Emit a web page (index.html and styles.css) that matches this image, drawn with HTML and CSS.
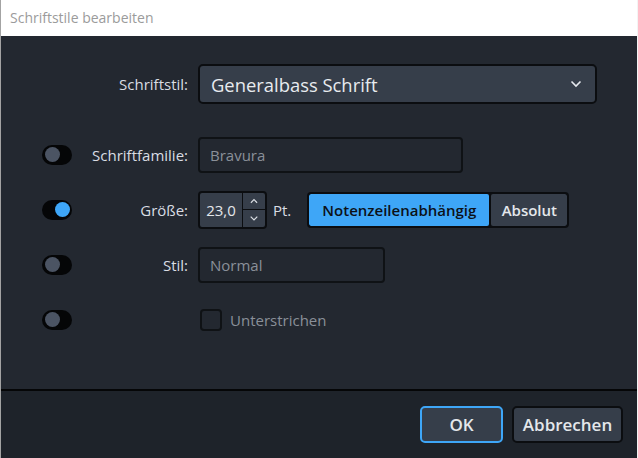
FILE: index.html
```html
<!DOCTYPE html>
<html lang="de">
<head>
<meta charset="utf-8">
<link rel="stylesheet" href="styles.css">
</head>
<body>
<div class="window">
  <div class="titlebar">Schriftstile bearbeiten</div>
  <div class="content">
    <div class="row main-row">
      <div class="cell"></div>
      <label class="label">Schriftstil:</label>
      <div class="select">
        <span class="select-text">Generalbass Schrift</span>
        <svg class="chev" width="12" height="8" viewBox="0 0 12 8"><path d="M1.5 1.5 L6 6 L10.5 1.5" fill="none" stroke="#e6e9ee" stroke-width="1.6"/></svg>
      </div>
    </div>
    <div class="row">
      <div class="toggle"><span class="knob"></span></div>
      <label class="label">Schriftfamilie:</label>
      <div class="input w-family">Bravura</div>
    </div>
    <div class="row">
      <div class="toggle on"><span class="knob"></span></div>
      <label class="label">Größe:</label>
      <div class="controls">
        <div class="spin">
          <span class="spin-val">23,0</span>
          <div class="spin-btns">
            <svg width="22" height="18" viewBox="0 0 22 18"><path d="M7.5 11 L11 7.5 L14.5 11" fill="none" stroke="#d8dce2" stroke-width="1.3"/></svg>
            <svg width="22" height="18" viewBox="0 0 22 18"><path d="M7.5 7 L11 10.5 L14.5 7" fill="none" stroke="#d8dce2" stroke-width="1.3"/></svg>
          </div>
        </div>
        <span class="unit">Pt.</span>
        <div class="segmented">
          <span class="seg active">Notenzeilenabhängig</span>
          <span class="seg plain">Absolut</span>
        </div>
      </div>
    </div>
    <div class="row">
      <div class="toggle"><span class="knob"></span></div>
      <label class="label">Stil:</label>
      <div class="input w-style">Normal</div>
    </div>
    <div class="row">
      <div class="toggle"><span class="knob"></span></div>
      <span class="label"></span>
      <div class="check-wrap">
        <span class="checkbox"></span>
        <span class="check-text">Unterstrichen</span>
      </div>
    </div>
  </div>
  <div class="footer">
    <button class="btn ok">OK</button>
    <button class="btn cancel">Abbrechen</button>
  </div>
</div>
</body>
</html>
```

FILE: styles.css
```css
* { box-sizing: border-box; }
html, body { margin: 0; padding: 0; background: #ffffff; }
body { font-family: "Open Sans", "Noto Sans", sans-serif; }

.window {
  width: 638px;
  height: 458px;
  display: flex;
  flex-direction: column;
  border-left: 1px solid #a3a3a3;
  border-right: 1px solid #f4f4f4;
}

.titlebar {
  height: 36px;
  background: #ffffff;
  color: #9b9b9b;
  font-size: 14px;
  padding-left: 9px;
  line-height: 36px;
}

.content {
  flex: 1;
  background: #232830;
  padding-top: 28px;
  padding-left: 41px;
  border-bottom: 2px solid #050607;
}

.row {
  display: grid;
  grid-template-columns: 30px 126px auto;
  align-items: center;
  height: 55px;
  color: #d9dde3;
  font-size: 15px;
}
.main-row { height: 40px; margin-bottom: 23px; }

.label { text-align: right; padding-right: 10px; }

.select {
  width: 399px;
  height: 40px;
  background: #363e4a;
  border: 2px solid #0b0d10;
  border-radius: 5px;
  display: flex;
  align-items: center;
  justify-content: space-between;
  padding: 0 13px 0 11px;
}
.select-text { font-size: 18.4px; color: #e8ebef; }

.toggle {
  width: 30px;
  height: 20px;
  border-radius: 10px;
  background: #050607;
  display: flex;
  align-items: center;
  padding: 0 3px;
}
.knob {
  width: 15px;
  height: 15px;
  border-radius: 50%;
  background: #4b5463;
}
.toggle.on { justify-content: flex-end; padding: 0 2px; }
.toggle.on .knob { background: #3ea6f7; }

.input {
  height: 36px;
  border: 2px solid #0f1215;
  border-radius: 4px;
  background: #232830;
  color: #8a9099;
  display: flex;
  align-items: center;
  padding-left: 10px;
}
.w-family { width: 265px; }
.w-style { width: 187px; }

.controls { display: flex; align-items: center; }
.spin {
  display: flex;
  height: 38px;
  width: 69px;
  border: 2px solid #0b0d10;
  border-radius: 4px;
  background: #363e4a;
  overflow: hidden;
}
.spin-val { width: 44px; display: flex; align-items: center; justify-content: center; color: #e4e7eb; }
.spin-btns { display: flex; flex-direction: column; border-left: 1px solid #0b0d10; }
.spin-btns svg { display: block; height: 17px; }
.spin-btns svg:first-child { border-bottom: 1px solid #0b0d10; }
.unit { margin-left: 6px; margin-right: 16px; }

.segmented {
  display: flex;
  height: 36px;
  border: 2px solid #0b0d10;
  border-radius: 4px;
  background: #0b0d10;
  gap: 2px;
  overflow: hidden;
}
.seg {
  display: flex;
  align-items: center;
  justify-content: center;
  background: #363e4a;
  color: #e4e7eb;
  font-weight: 600;
  border-radius: 2px;
}
.seg.active { background: #3ea6f7; color: #0c1118; width: 180px; }
.seg.plain { width: 76px; }

.check-wrap { display: flex; align-items: center; padding-left: 2px; }
.checkbox {
  width: 22px;
  height: 22px;
  border: 2px solid #0f1215;
  border-radius: 4px;
  background: #232830;
}
.check-text { margin-left: 8px; color: #8a9099; }

.footer {
  height: 67px;
  background: #1e232a;
  display: flex;
  justify-content: flex-end;
  align-items: flex-start;
  padding: 15px 14px 0 0;
  gap: 9px;
}
.btn {
  height: 37px;
  font-family: inherit;
  font-size: 17px;
  font-weight: 600;
  color: #e4e7eb;
  background: #363e4a;
  border: 2px solid #0b0d10;
  border-radius: 5px;
  padding: 0;
}
.btn.ok { width: 83px; border-color: #3ea6f7; }
.btn.cancel { width: 111px; }
```
